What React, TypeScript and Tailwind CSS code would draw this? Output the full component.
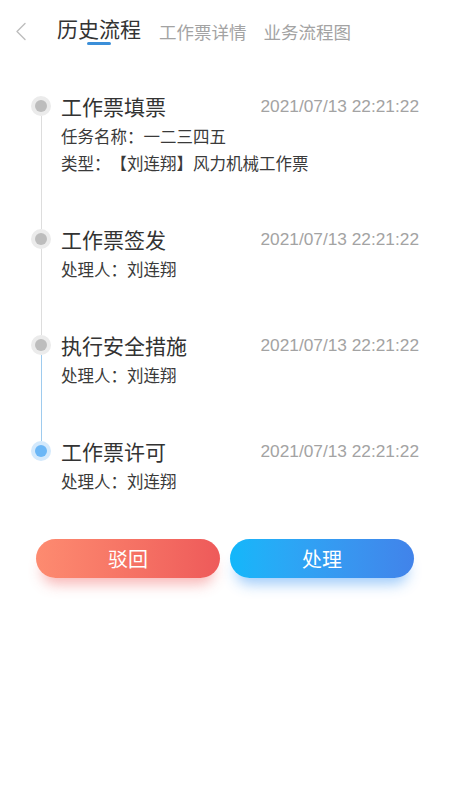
import React from "react";

type Item = {
  title: string;
  time: string;
  lines: string[];
  active?: boolean;
};

const items: Item[] = [
  {
    title: "工作票填票",
    time: "2021/07/13 22:21:22",
    lines: ["任务名称：一二三四五", "类型：【刘连翔】风力机械工作票"],
  },
  { title: "工作票签发", time: "2021/07/13 22:21:22", lines: ["处理人：刘连翔"] },
  { title: "执行安全措施", time: "2021/07/13 22:21:22", lines: ["处理人：刘连翔"] },
  { title: "工作票许可", time: "2021/07/13 22:21:22", lines: ["处理人：刘连翔"], active: true },
];

const CJK = "font-['Noto_Sans_CJK_SC',sans-serif]";
const LATIN = "font-['Liberation_Sans','Noto_Sans_CJK_SC',sans-serif]";

export default function App() {
  return (
    <div className={`w-[450px] min-h-[800px] bg-white [text-spacing-trim:space-all] ${CJK}`}>
      {/* Header */}
      <div className="flex h-[60px] items-start">
        <div className="ml-[15px] mt-[22px]">
          <svg width="12" height="19" viewBox="0 0 12 19" fill="none">
            <path d="M10 1.5 L2 9.5 L10 17.5" stroke="#bdbdbd" strokeWidth="1.4" strokeLinecap="round" strokeLinejoin="round" />
          </svg>
        </div>
        <div className="ml-[30px] mt-[16px] flex flex-col items-center">
          <span className="text-[21px] leading-[24px] text-[#333333]">历史流程</span>
          <span className="mt-[2px] h-[3px] w-[24px] rounded-full bg-[#3b8fd9]" />
        </div>
        <span className="ml-[18px] mt-[20px] text-[17.5px] leading-[24px] text-[#a3a3a3]">工作票详情</span>
        <span className="ml-[17px] mt-[20px] text-[17.5px] leading-[24px] text-[#a3a3a3]">业务流程图</span>
      </div>

      {/* Timeline */}
      <div className="mt-[31px] flex flex-col">
        {items.map((it, i) => {
          const isFirst = i === 0;
          const isLast = i === items.length - 1;
          const topBlue = it.active;
          const bottomBlue = items[i + 1]?.active;
          return (
            <div key={i} className="flex">
              <div className="ml-[31px] flex w-[20px] flex-col items-center">
                <div className={`h-[5px] w-px ${isFirst ? "" : topBlue ? "bg-[#9ecbee]" : "bg-[#dddddd]"}`} />
                <div
                  className={`flex h-[20px] w-[20px] items-center justify-center rounded-full ${
                    it.active ? "bg-[#d3e9fc]" : "bg-[#ebebeb]"
                  }`}
                >
                  <div className={`h-[12px] w-[12px] rounded-full ${it.active ? "bg-[#6cb7f6]" : "bg-[#bdbdbd]"}`} />
                </div>
                {!isLast && <div className={`w-px flex-1 ${bottomBlue ? "bg-[#9ecbee]" : "bg-[#dddddd]"}`} />}
              </div>
              <div className={`ml-[10px] flex flex-1 flex-col pr-[31px] ${isLast ? "" : "pb-[47px]"}`}>
                <div className="flex h-[30px] items-center justify-between">
                  <span className="text-[21px] leading-[30px] text-[#333333]">{it.title}</span>
                  <span className={`${LATIN} text-[17.3px] leading-[30px] text-[#a3a3a3]`}>{it.time}</span>
                </div>
                <div className="mt-[2px] flex flex-col">
                  {it.lines.map((l, j) => (
                    <span key={j} className="text-[16.5px] leading-[27px] text-[#3a3a3a]">
                      {l}
                    </span>
                  ))}
                </div>
              </div>
            </div>
          );
        })}
      </div>

      {/* Buttons */}
      <div className="ml-[36px] mt-[44px] flex gap-[10px]">
        <button className="flex h-[39px] w-[184px] items-center justify-center rounded-full bg-gradient-to-r from-[#fd8b70] to-[#ee5a5a] text-[20px] text-white shadow-[0_12px_14px_-6px_rgba(240,90,90,0.45)]">
          驳回
        </button>
        <button className="flex h-[39px] w-[184px] items-center justify-center rounded-full bg-gradient-to-r from-[#12b7fa] to-[#4183ea] text-[20px] text-white shadow-[0_12px_14px_-6px_rgba(40,140,245,0.45)]">
          处理
        </button>
      </div>
    </div>
  );
}
